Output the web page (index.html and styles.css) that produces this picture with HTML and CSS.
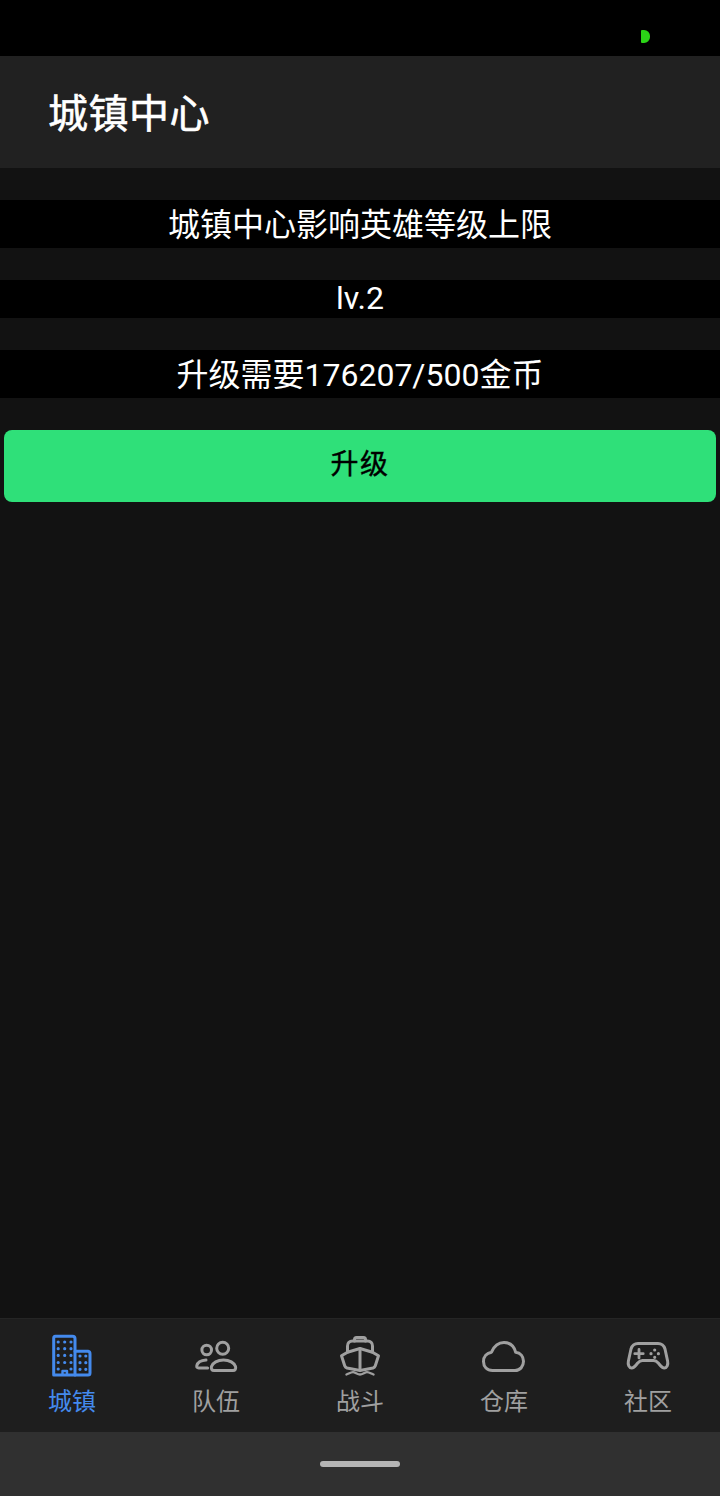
FILE: index.html
```html
<!DOCTYPE html>
<html lang="zh-CN">
<head>
<meta charset="utf-8">
<title>城镇中心</title>
<link rel="stylesheet" href="styles.css">
</head>
<body>
<div class="app">
  <div class="status"><span class="battery"></span></div>
  <header class="appbar"><h1 class="title">城镇中心</h1></header>
  <main class="content">
    <p class="line">城镇中心影响英雄等级上限</p>
    <p class="line line-short">lv.2</p>
    <p class="line">升级需要176207/500金币</p>
    <button class="upgrade">升级</button>
  </main>
  <nav class="tabs">
    <div class="tab active">
      <svg class="icon" viewBox="0 0 48 48" fill="none" stroke="currentColor" stroke-width="3" stroke-linejoin="round" stroke-linecap="round">
        <path d="M7.500 4.200h17a2.500 2.500 0 0 1 2.500 2.500V43H5.700V6.200a2 2 0 0 1 1.800-2z"/>
        <path d="M27 19.200h13a2.500 2.500 0 0 1 2 2.500V41a2 2 0 0 1-2 2H27"/>
        <path d="M14.500 42v-3h4.500v3" stroke-width="2.400"/>
        <path stroke-width="3.200" d="M10.200 10h0M16.700 10h0M23 10h0M10.200 16.700h0M16.700 16.700h0M23 16.700h0M10.200 23.400h0M16.700 23.400h0M23 23.400h0M10.200 30.500h0M16.700 30.500h0M23 30.500h0M10.200 37h0M23 37h0M32 24h0M37.800 24h0M32 30.700h0M37.800 30.700h0M32 37.300h0M37.800 37.300h0"/>
      </svg>
      <span class="label">城镇</span>
    </div>
    <div class="tab">
      <svg class="icon" viewBox="0 0 48 48" fill="none" stroke="currentColor" stroke-width="3" stroke-linecap="round" stroke-linejoin="round">
        <circle cx="14.700" cy="18" r="4.800"/>
        <circle cx="30.700" cy="16.300" r="6"/>
        <path d="M14 28c-5 .3-8.500 2.800-9.200 5.700-.3 1.500.4 2.300 1.800 2.300h9"/>
        <path d="M31.500 28c-6 0-10.800 2.900-12 6.500-.7 2.300.4 4 2.500 4h19c2.100 0 3.200-1.700 2.500-4-1.200-3.600-6-6.500-12-6.500z"/>
      </svg>
      <span class="label">队伍</span>
    </div>
    <div class="tab">
      <svg class="icon" viewBox="0 0 48 48" fill="none" stroke="currentColor" stroke-width="3" stroke-linecap="round" stroke-linejoin="round">
        <path d="M18.500 9V7.500a2 2 0 0 1 2-2h7a2 2 0 0 1 2 2V9"/>
        <path d="M11.500 20v-6c0-3 2-5 5-5h15c3 0 5 2 5 5v6"/>
        <path d="M24 16.500l-12.500 3.800-6 3.500 3.200 10c.4 1.200 1.100 1.800 2.300 2.200l13 2.500 13-2.500c1.200-.4 1.900-1 2.300-2.200l3.200-10-6-3.500z"/>
        <path d="M24 16.500v21.500"/>
        <path d="M10.500 42.500c2.500-1 4.500-2.400 6.500-2.400s4.500 2.400 7 2.400 5-2.400 7-2.400 4 1.400 6.500 2.400" stroke-width="2.400"/>
      </svg>
      <span class="label">战斗</span>
    </div>
    <div class="tab">
      <svg class="icon" viewBox="0 0 48 48" fill="none" stroke="currentColor" stroke-width="3" stroke-linejoin="round">
        <path d="M12.500 38.500c-5.500 0-9-3.800-9-9 0-4.800 3.300-8.500 8-9.300C14 14.200 18.300 10.500 24 10.500c5.900 0 10.200 3.900 11.700 9.800 4.800.3 7.800 4.300 7.800 9 0 5.300-3.500 9.200-8.500 9.200z"/>
      </svg>
      <span class="label">仓库</span>
    </div>
    <div class="tab">
      <svg class="icon" viewBox="0 0 48 48" fill="none" stroke="currentColor" stroke-width="3" stroke-linecap="round" stroke-linejoin="round">
        <path d="M14 11.500h20c3.600 0 6 2.200 7 5.500l2.600 12c.8 3.800-.7 7-3.300 7-2.300 0-3.800-2.200-5.800-4.700-1.500-1.700-3-2.800-5-2.800H18.500c-2 0-3.500 1.100-5 2.800-2 2.500-3.500 4.700-5.800 4.700-2.600 0-4.100-3.200-3.300-7L7 17c1-3.300 3.400-5.500 7-5.500z"/>
        <path d="M15 17.500v8.400M10.800 21.700h8.400" stroke-width="2.800"/>
        <path d="M30.700 18h0M30.700 25.300h0M27 21.700h0M34.400 21.700h0" stroke-width="3.200"/>
      </svg>
      <span class="label">社区</span>
    </div>
  </nav>
  <div class="navbar"><span class="handle"></span></div>
</div>
</body>
</html>
```
FILE: styles.css
```css
* { box-sizing: border-box; }
html, body { margin: 0; padding: 0; background: #121212; }
.app {
  width: 720px;
  height: 1496px;
  display: flex;
  flex-direction: column;
  font-family: Roboto, "Noto Sans CJK SC", sans-serif;
  color: #fff;
}
.status {
  height: 56px;
  background: #000;
  display: flex;
  align-items: center;
  padding: 16px 0 0 641px;
}
.battery {
  width: 9px;
  height: 13px;
  background: #2bd417;
  border-radius: 1px 6px 6px 1px;
}
.appbar {
  height: 112px;
  background: #212121;
  display: flex;
  align-items: center;
  padding: 6px 0 0 48px;
}
.title {
  margin: 0;
  font-size: 40px;
  font-weight: 400;
  -webkit-text-stroke: 0.6px #fff;
  letter-spacing: 0.5px;
  line-height: 48px;
}
.content {
  flex: 1;
  background: #121212;
  padding: 32px 4px 0;
  display: flex;
  flex-direction: column;
}
.line {
  margin: 0 -4px 32px;
  background: #000;
  text-align: center;
  font-size: 32px;
  line-height: 50px;
  height: 48px;
}
.line-short {
  height: 38px;
  line-height: 36px;
}
.upgrade {
  height: 72px;
  border: 0;
  border-radius: 8px;
  background: #2fe079;
  color: #000;
  font-family: inherit;
  font-size: 28px;
  font-weight: 400;
  -webkit-text-stroke: 0.4px #000;
  letter-spacing: 1.400px;
  padding: 0 0 8px;
}
.tabs {
  height: 114px;
  background: #1e1e1e;
  border-top: 1px solid #252525;
  display: flex;
}
.tab {
  flex: 1;
  display: flex;
  flex-direction: column;
  align-items: center;
  color: #a0a0a0;
  padding-top: 13px;
}
.tab.active { color: #448aed; }
.icon {
  width: 48px;
  height: 48px;
  display: block;
}
.label {
  font-size: 24px;
  line-height: 32px;
  margin-top: 6px;
}
.navbar {
  height: 64px;
  background: #303030;
  display: flex;
  align-items: center;
  justify-content: center;
}
.handle {
  width: 80px;
  height: 6px;
  border-radius: 3px;
  background: #b5b5b5;
}
```
